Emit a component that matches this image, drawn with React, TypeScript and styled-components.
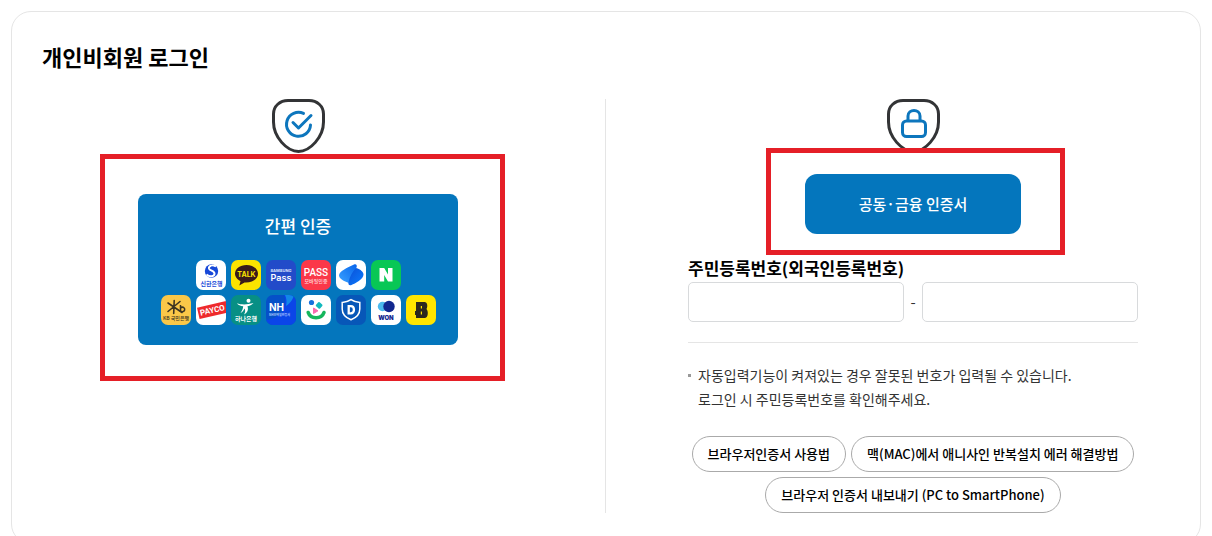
import React from "react";
import styled, { createGlobalStyle } from "styled-components";

const GlobalStyle = createGlobalStyle`
  *, *::before, *::after { box-sizing: border-box; }
  body {
    margin: 0;
    background: #fff;
    color: #000;
    font-family: "Noto Sans CJK KR", "Noto Sans", sans-serif;
  }
  button, input { font-family: inherit; }
`;

const Card = styled.main`
  margin: 11px;
  padding: 30px 31px 30px 30px;
  border: 1px solid #e5e5e5;
  border-radius: 20px;
`;

const Title = styled.h1`
  margin: 0 0 29px;
  font-size: 22px;
  line-height: 28px;
  font-weight: 700;
`;

const Columns = styled.div`
  display: grid;
  grid-template-columns: 1fr 1px 1fr;
  column-gap: 51px;
`;

const Divider = styled.div`
  background: #e5e5e5;
`;

const Column = styled.section`
  display: flex;
  flex-direction: column;
  align-items: center;
`;

const ShieldSvg = styled.svg`
  display: block;
  width: 53px;
  height: 54px;
`;

const Highlight = styled.div<{ $inset: string; $gap: number }>`
  position: relative;
  margin-top: ${(p) => p.$gap}px;
  &::after {
    content: "";
    position: absolute;
    inset: ${(p) => p.$inset};
    border: 5px solid #e51f27;
    pointer-events: none;
  }
`;

const SimpleAuthButton = styled.button`
  display: flex;
  flex-direction: column;
  align-items: center;
  width: 320px;
  padding: 20px 0;
  border: 0;
  border-radius: 8px;
  background: #0476bd;
  color: #fff;
  cursor: pointer;
`;

const SimpleAuthLabel = styled.span`
  margin-bottom: 22px;
  font-size: 17px;
  line-height: 24px;
  font-weight: 500;
`;

const Tiles = styled.span`
  display: flex;
  flex-direction: column;
  gap: 5px;
  padding-right: 1px;
  padding-left: 2px;
`;

const TileRow = styled.span`
  display: flex;
  justify-content: center;
  gap: 5px;
`;

const TileSvg = styled.svg`
  display: block;
  width: 30px;
  height: 30px;
  border-radius: 7px;
  font-family: "Noto Sans CJK KR", sans-serif;
`;

const CertButton = styled.button`
  width: 216px;
  height: 60px;
  padding: 0 0 2px;
  border: 0;
  border-radius: 12px;
  background: #0476bd;
  color: #fff;
  font-size: 15px;
  font-weight: 500;
  cursor: pointer;
`;

const Form = styled.form`
  width: 100%;
  max-width: 450px;
  margin-top: 20px;
`;

const FieldLabel = styled.label`
  display: block;
  margin-bottom: 1px;
  font-size: 17px;
  line-height: 27px;
  font-weight: 700;
`;

const Fields = styled.div`
  display: flex;
  align-items: center;
  padding-bottom: 20px;
  border-bottom: 1px solid #e5e5e5;
`;

const NumberInput = styled.input`
  flex: 1;
  min-width: 0;
  height: 40px;
  padding: 0 12px;
  border: 1px solid #d8dadc;
  border-radius: 5px;
  background: #fff;
  font-size: 15px;
`;

const Dash = styled.span`
  width: 18px;
  text-align: center;
  font-size: 15px;
  line-height: 24px;
  color: #333;
`;

const Notes = styled.ul`
  margin: 20px 0 25px;
  padding: 0;
  list-style: none;
`;

const Note = styled.li`
  display: flex;
  gap: 7px;
  font-size: 14px;
  line-height: 24px;
  color: #333;
  &::before {
    content: "";
    flex: none;
    width: 3px;
    height: 3px;
    margin-top: 11px;
    background: #999;
  }
`;

const Guides = styled.div`
  display: flex;
  flex-wrap: wrap;
  justify-content: center;
  gap: 5px;
`;

const GuideButton = styled.button`
  height: 36px;
  padding: 0 15px 2px;
  border: 1px solid #aaa;
  border-radius: 18px;
  background: #fff;
  color: #000;
  font-size: 13px;
  font-weight: 500;
  white-space: nowrap;
  cursor: pointer;
`;

const Shield = ({ children }: { children: React.ReactNode }) => (
  <ShieldSvg viewBox="0 0 53 54" fill="none" aria-hidden="true">
    <path
      d="M16 1.5H37C45 1.5 51.500 7 51.500 15V23C51.500 38 38 52.500 26.500 52.500S1.500 38 1.500 23V15C1.500 7 8 1.500 16 1.500Z"
      stroke="#333436"
      strokeWidth="3"
    />
    {children}
  </ShieldSvg>
);

const Tile = ({ bg, children }: { bg: string; children: React.ReactNode }) => (
  <TileSvg viewBox="0 0 30 30" aria-hidden="true">
    <rect width="30" height="30" fill={bg} />
    {children}
  </TileSvg>
);

const Shinhan = () => (
  <Tile bg="#fff">
    <circle cx="15.500" cy="11" r="6.700" fill="#1748d8" />
    <path
      d="M20 6.500C17 4.500 12.500 5.500 13 8.500C13.500 11 18.500 10.500 18.500 13.500C18.500 16.500 14 17.500 10.500 14.500"
      stroke="#fff"
      strokeWidth="2"
      fill="none"
    />
    <path d="M19.500 8C17 6.500 14.700 7 14.800 8.300" stroke="#1748d8" strokeWidth="1" fill="none" />
    <text x="15.500" y="25.500" textAnchor="middle" fontSize="6" fontWeight="700" fill="#1748d8">신한은행</text>
  </Tile>
);

const Kakao = () => (
  <Tile bg="#fbe300">
    <path
      d="M15.500 5C9 5 4 8.800 4 13.800C4 17 6.500 19.700 9.500 21.200L8.300 25.500L13.500 22.500C21.500 23 27 19 27 13.800C27 8.800 22 5 15.500 5Z"
      fill="#391b1b"
    />
    <text x="15.500" y="16.500" textAnchor="middle" fontSize="7" fontWeight="700" fill="#fbe300" fontFamily="Inter, sans-serif">TALK</text>
  </Tile>
);

const SamsungPass = () => (
  <Tile bg="#224bc9">
    <text x="15" y="12" textAnchor="middle" fontSize="4" fontWeight="700" fill="#dfe8ff" fontFamily="Inter, sans-serif">SAMSUNG</text>
    <text x="15" y="21" textAnchor="middle" fontSize="9" fontWeight="600" fill="#fff" fontFamily="Inter, sans-serif">Pass</text>
  </Tile>
);

const Pass = () => (
  <Tile bg="#fb3849">
    <text x="15" y="16" textAnchor="middle" fontSize="10" fontWeight="500" fill="#fff" fontFamily="Roboto, sans-serif">PASS</text>
    <text x="15" y="23" textAnchor="middle" fontSize="5" fontWeight="500" fill="#ffd9dc">모바일인증</text>
  </Tile>
);

const Toss = () => (
  <Tile bg="#fff">
    <defs>
      <linearGradient id="tossA" x1="0" y1="1" x2="1" y2="0">
        <stop offset="0" stopColor="#3aa2ff" />
        <stop offset="1" stopColor="#0764ec" />
      </linearGradient>
      <linearGradient id="tossB" x1="0" y1="0" x2="1" y2="1">
        <stop offset="0" stopColor="#0b50d6" />
        <stop offset="1" stopColor="#0a7cff" />
      </linearGradient>
    </defs>
    <path d="M18 4.500C20 3.500 21.500 5 20.500 7.500L13 23C8 21.500 3 18.500 3 15.500C3 11.500 11 7.500 18 4.500Z" fill="url(#tossA)" />
    <path d="M20 8C25 9.500 27.500 12 27.500 14.500C27.500 19.500 19 23.500 15.500 25C13.500 25.800 12 25 12.500 22.500C13.500 17 16 12 20 8Z" fill="url(#tossB)" />
  </Tile>
);

const Naver = () => (
  <Tile bg="#08c755">
    <path d="M8.500 8H13.200L17 14.500V8H21.500V21.500H17L13.200 15V21.500H8.500Z" fill="#fff" />
  </Tile>
);

const KbBank = () => (
  <Tile bg="#fac748">
    <path
      d="M13.200 5.500L12.700 18.500M7 8L21 17.500M19 6.500L7 16.500"
      stroke="#3d3422"
      strokeWidth="1.600"
      strokeLinecap="round"
      fill="none"
    />
    <path d="M19.500 10V17M19.500 13C22 11 24.500 13 23.500 15.500C22.500 17 20.500 17 19.500 16" stroke="#3d3422" strokeWidth="1.500" fill="none" />
    <text x="15" y="25" textAnchor="middle" fontSize="5" fontWeight="500" fill="#3d3422">KB 국민은행</text>
  </Tile>
);

const Payco = () => (
  <Tile bg="#fff">
    <g transform="rotate(-13 16 15.500)">
      <rect x="2" y="9.500" width="32" height="11.500" fill="#ee2a2c" />
      <text x="4" y="18" fontSize="8" fontWeight="700" fill="#fff" fontFamily="Roboto, sans-serif">PAYCO</text>
    </g>
  </Tile>
);

const Hana = () => (
  <Tile bg="#078f85">
    <circle cx="17.500" cy="5.700" r="2" fill="#fff" />
    <path d="M6 8.200C10 9.800 16 9.800 22.500 8C20.500 10.500 17.500 11 16.500 11.300C17.500 14.500 17 17.500 13 19.500C14.500 17 14.500 15 13.500 13.500C12.500 15.500 11.500 17 9.500 18C11.300 15.500 12 13.500 12.200 11.300C9.500 11 7 10 6 8.200Z" fill="#fff" />
    <text x="15" y="26" textAnchor="middle" fontSize="6" fontWeight="700" fill="#fff">하나은행</text>
  </Tile>
);

const NhBank = () => (
  <Tile bg="#0550c8">
    <path d="M18 0H30V30H0V25C14 23 22 14 18 0Z" fill="#0b45e8" />
    <path d="M19 0H28C27 5 23 9 20 11C21 7 20.500 3 19 0Z" fill="#1287e8" />
    <text x="3" y="15.500" fontSize="10" fontWeight="700" fill="#fff" fontFamily="Inter, sans-serif">NH</text>
    <text x="3" y="21" fontSize="3" fontWeight="700" fill="#b9d0ff">NH모바일인증서</text>
  </Tile>
);

const SmileCert = () => (
  <Tile bg="#fff">
    <circle cx="10.500" cy="7.500" r="2.600" fill="#1671dc" />
    <path d="M18 8L20.500 10.300L18.300 12.800L15.800 10.500Z" fill="#12b9bd" stroke="#12b9bd" strokeWidth="2" strokeLinejoin="round" />
    <path d="M12.500 13L17 15.800L12.500 18.500Z" fill="#f86bae" stroke="#f86bae" strokeLinejoin="round" />
    <path d="M7.200 17.500C9.500 24.500 20.500 24.500 23 17.500" stroke="#15b65c" strokeWidth="3.600" fill="none" strokeLinecap="round" />
  </Tile>
);

const DreamCert = () => (
  <Tile bg="#0757b8">
    <path d="M15 4.700C17.500 6.500 20.500 7.300 23.800 7.500V14C23.800 19 20 22.800 15 24.800C10 22.800 6.200 19 6.200 14V7.500C9.500 7.300 12.500 6.500 15 4.700Z" stroke="#fff" strokeWidth="1.500" fill="none" />
    <path d="M12.700 11.200H14.800C19 11.200 19 18.300 14.800 18.300H12.700Z" stroke="#fff" strokeWidth="2.300" fill="none" />
  </Tile>
);

const WooriWon = () => (
  <Tile bg="#fff">
    <circle cx="11.500" cy="11.500" r="4.700" fill="#4cb9ed" />
    <circle cx="18" cy="11.500" r="5.700" fill="#12278f" />
    <text x="15" y="24.500" textAnchor="middle" fontSize="6" fontWeight="900" fill="#12278f" fontFamily="Inter, sans-serif">WON</text>
  </Tile>
);

const KbStar = () => (
  <Tile bg="#ffe500">
    <path
      fillRule="evenodd"
      d="M10 7H18.500C21.500 7 22 11.500 20.500 14C22.500 16 22.500 23 18.500 23H10V20H9V16H10ZM14.800 11V13.500H16V11ZM14.800 16.500V19.500H16V16.500Z"
      fill="#2b281e"
    />
  </Tile>
);

export default function App() {
  return (
    <>
      <GlobalStyle />
      <Card>
        <Title>개인비회원 로그인</Title>
        <Columns>
          <Column>
            <Shield>
              <path d="M31.500 14.400A12 12 0 1 0 38.500 26" stroke="#0d76bd" strokeWidth="3" strokeLinecap="round" />
              <path d="M21 23.500L26.500 29L39 16.500" stroke="#0d76bd" strokeWidth="3" strokeLinecap="round" strokeLinejoin="round" />
            </Shield>
            <Highlight $gap={41} $inset="-40px -47px -36px -38px">
              <SimpleAuthButton type="button">
                <SimpleAuthLabel>간편 인증</SimpleAuthLabel>
                <Tiles>
                  <TileRow>
                    <Shinhan />
                    <Kakao />
                    <SamsungPass />
                    <Pass />
                    <Toss />
                    <Naver />
                  </TileRow>
                  <TileRow>
                    <KbBank />
                    <Payco />
                    <Hana />
                    <NhBank />
                    <SmileCert />
                    <DreamCert />
                    <WooriWon />
                    <KbStar />
                  </TileRow>
                </Tiles>
              </SimpleAuthButton>
            </Highlight>
          </Column>
          <Divider />
          <Column>
            <Shield>
              <rect x="15.500" y="22" width="23" height="15.500" rx="4" stroke="#0d76bd" strokeWidth="3" />
              <path d="M21 22V17C21 9.500 33 9.500 33 17V22" stroke="#0d76bd" strokeWidth="3" />
            </Shield>
            <Highlight $gap={21} $inset="-26px -44px -21px -39px">
              <CertButton type="button">공동·금융 인증서</CertButton>
            </Highlight>
            <Form>
              <FieldLabel htmlFor="idFront">주민등록번호(외국인등록번호)</FieldLabel>
              <Fields>
                <NumberInput id="idFront" type="text" inputMode="numeric" maxLength={6} />
                <Dash>-</Dash>
                <NumberInput type="password" inputMode="numeric" maxLength={7} aria-label="주민등록번호 뒷자리" />
              </Fields>
              <Notes>
                <Note>
                  <span>
                    자동입력기능이 켜져있는 경우 잘못된 번호가 입력될 수 있습니다.
                    <br />
                    로그인 시 주민등록번호를 확인해주세요.
                  </span>
                </Note>
              </Notes>
              <Guides>
                <GuideButton type="button">브라우저인증서 사용법</GuideButton>
                <GuideButton type="button">맥(MAC)에서 애니사인 반복설치 에러 해결방법</GuideButton>
                <GuideButton type="button">브라우저 인증서 내보내기 (PC to SmartPhone)</GuideButton>
              </Guides>
            </Form>
          </Column>
        </Columns>
      </Card>
    </>
  );
}
